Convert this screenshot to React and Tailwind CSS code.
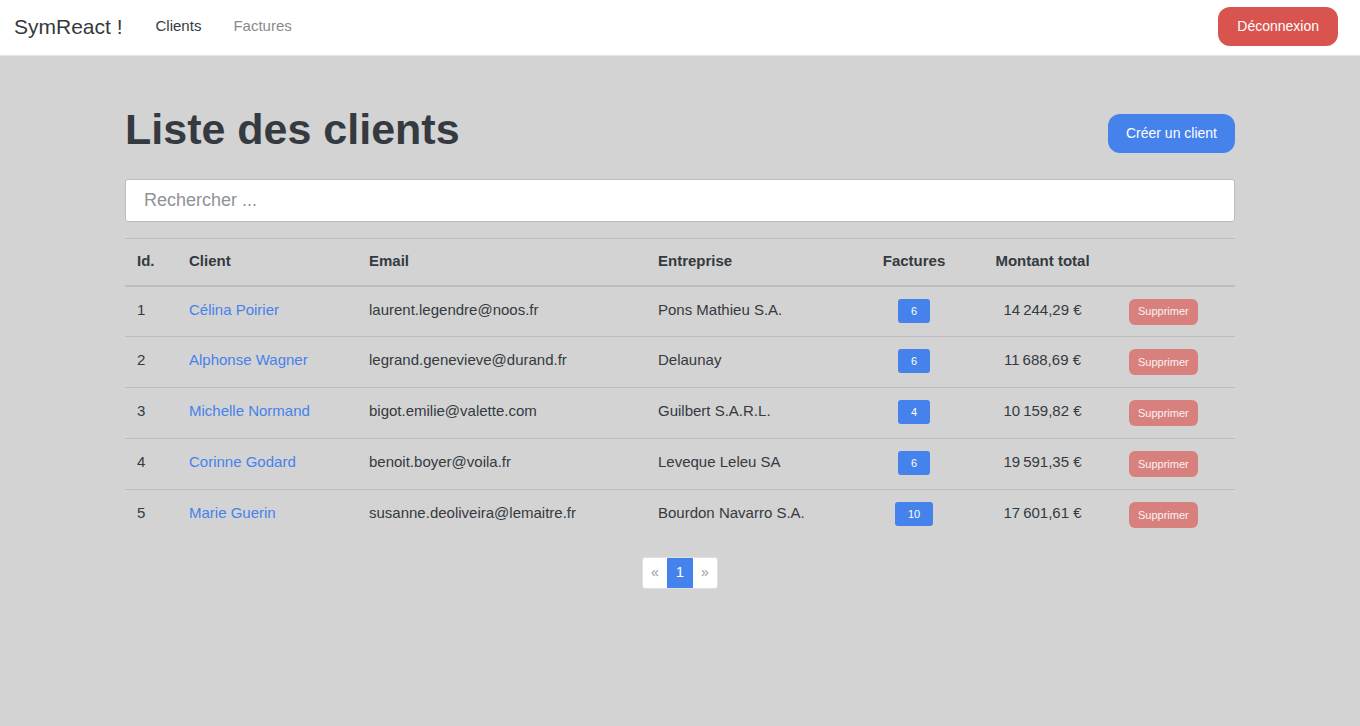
const customers = [
  { id: 1, name: 'Célina Poirier', email: 'laurent.legendre@noos.fr', company: 'Pons Mathieu S.A.', invoices: 6, total: '14\u202f244,29 €' },
  { id: 2, name: 'Alphonse Wagner', email: 'legrand.genevieve@durand.fr', company: 'Delaunay', invoices: 6, total: '11\u202f688,69 €' },
  { id: 3, name: 'Michelle Normand', email: 'bigot.emilie@valette.com', company: 'Guilbert S.A.R.L.', invoices: 4, total: '10\u202f159,82 €' },
  { id: 4, name: 'Corinne Godard', email: 'benoit.boyer@voila.fr', company: 'Leveque Leleu SA', invoices: 6, total: '19\u202f591,35 €' },
  { id: 5, name: 'Marie Guerin', email: 'susanne.deoliveira@lemaitre.fr', company: 'Bourdon Navarro S.A.', invoices: 10, total: '17\u202f601,61 €' },
]

function Navbar() {
  return (
    <nav className="flex h-[56px] items-center justify-between border-b border-[#e5e5e5] bg-white pb-[2px] pl-[14px] pr-[22px]">
      <div className="flex items-center">
        <a className="text-[21px] text-[#343a40]">SymReact !</a>
        <ul className="ml-[17px] flex items-center text-[15px]">
          <li className="px-[16px] text-[#343a40]">Clients</li>
          <li className="px-[16px] text-[#8a8a8a]">Factures</li>
        </ul>
      </div>
      <button className="h-[39px] rounded-[12px] bg-[#d9534f] px-[19px] text-[14px] text-white">Déconnexion</button>
    </nav>
  )
}

function Row({ c }) {
  return (
    <tr className="h-[51px] border-t border-[#bdbdbd] align-top first:border-t-0">
      <td className="px-[12px] pt-[12px]">{c.id}</td>
      <td className="px-[12px] pt-[12px] text-[#4582ec]">{c.name}</td>
      <td className="px-[12px] pt-[12px]">{c.email}</td>
      <td className="px-[12px] pt-[12px]">{c.company}</td>
      <td className="px-[12px] pt-[12px] text-center">
        <span className="inline-flex h-[24px] items-center rounded-[3px] bg-[#4582ec] px-[13px] text-[11px] text-white">{c.invoices}</span>
      </td>
      <td className="px-[12px] pt-[12px] text-center">{c.total}</td>
      <td className="pl-[14px] pr-[12px] pt-[12px]">
        <button className="h-[26px] rounded-[6px] bg-[#d7807d] px-[9px] text-[11px] text-white/90">Supprimer</button>
      </td>
    </tr>
  )
}

export default function App() {
  return (
    <div className="min-h-[726px] bg-[#d3d3d3] font-['Liberation_Sans',Arial,sans-serif] text-[#343a40]">
      <Navbar />
      <main className="mx-auto w-[1110px] pt-[45px]">
        <div className="flex items-center justify-between">
          <h1 className="text-[43px] font-bold leading-[56px]">Liste des clients</h1>
          <button className="mt-[8px] h-[39px] rounded-[12px] bg-[#4582ec] px-[18px] text-[14px] text-white">Créer un client</button>
        </div>
        <div className="mt-[22px]">
          <input
            className="h-[43px] w-full rounded-[3px] border border-[#bdbdbd] bg-white px-[18px] text-[18px] placeholder:text-[#8e9399] outline-none"
            placeholder="Rechercher ..."
          />
        </div>
        <table className="mt-[16px] w-full table-fixed border-t border-[#bdbdbd] text-left text-[15px]">
          <colgroup>
            <col className="w-[52px]" />
            <col className="w-[180px]" />
            <col className="w-[289px]" />
            <col className="w-[212px]" />
            <col className="w-[112px]" />
            <col className="w-[145px]" />
            <col />
          </colgroup>
          <thead>
            <tr className="h-[47px] border-b-2 border-[#bdbdbd]">
              <th className="px-[12px] pb-[2px] font-bold">Id.</th>
              <th className="px-[12px] pb-[2px] font-bold">Client</th>
              <th className="px-[12px] pb-[2px] font-bold">Email</th>
              <th className="px-[12px] pb-[2px] font-bold">Entreprise</th>
              <th className="px-[12px] pb-[2px] text-center font-bold">Factures</th>
              <th className="px-[12px] pb-[2px] text-center font-bold">Montant total</th>
              <th className="px-[12px]" />
            </tr>
          </thead>
          <tbody>
            {customers.map(c => <Row key={c.id} c={c} />)}
          </tbody>
        </table>
        <div className="mt-[16px] flex justify-center">
          <ul className="flex h-[32px] overflow-hidden rounded-[3px] border border-[#e0e0e0] bg-white text-[14px]">
            <li className="flex w-[24px] items-center justify-center text-[#9a9a9a]">«</li>
            <li className="flex w-[26px] items-center justify-center bg-[#4582ec] text-[15px] text-white">1</li>
            <li className="flex w-[24px] items-center justify-center text-[#9a9a9a]">»</li>
          </ul>
        </div>
      </main>
    </div>
  )
}
